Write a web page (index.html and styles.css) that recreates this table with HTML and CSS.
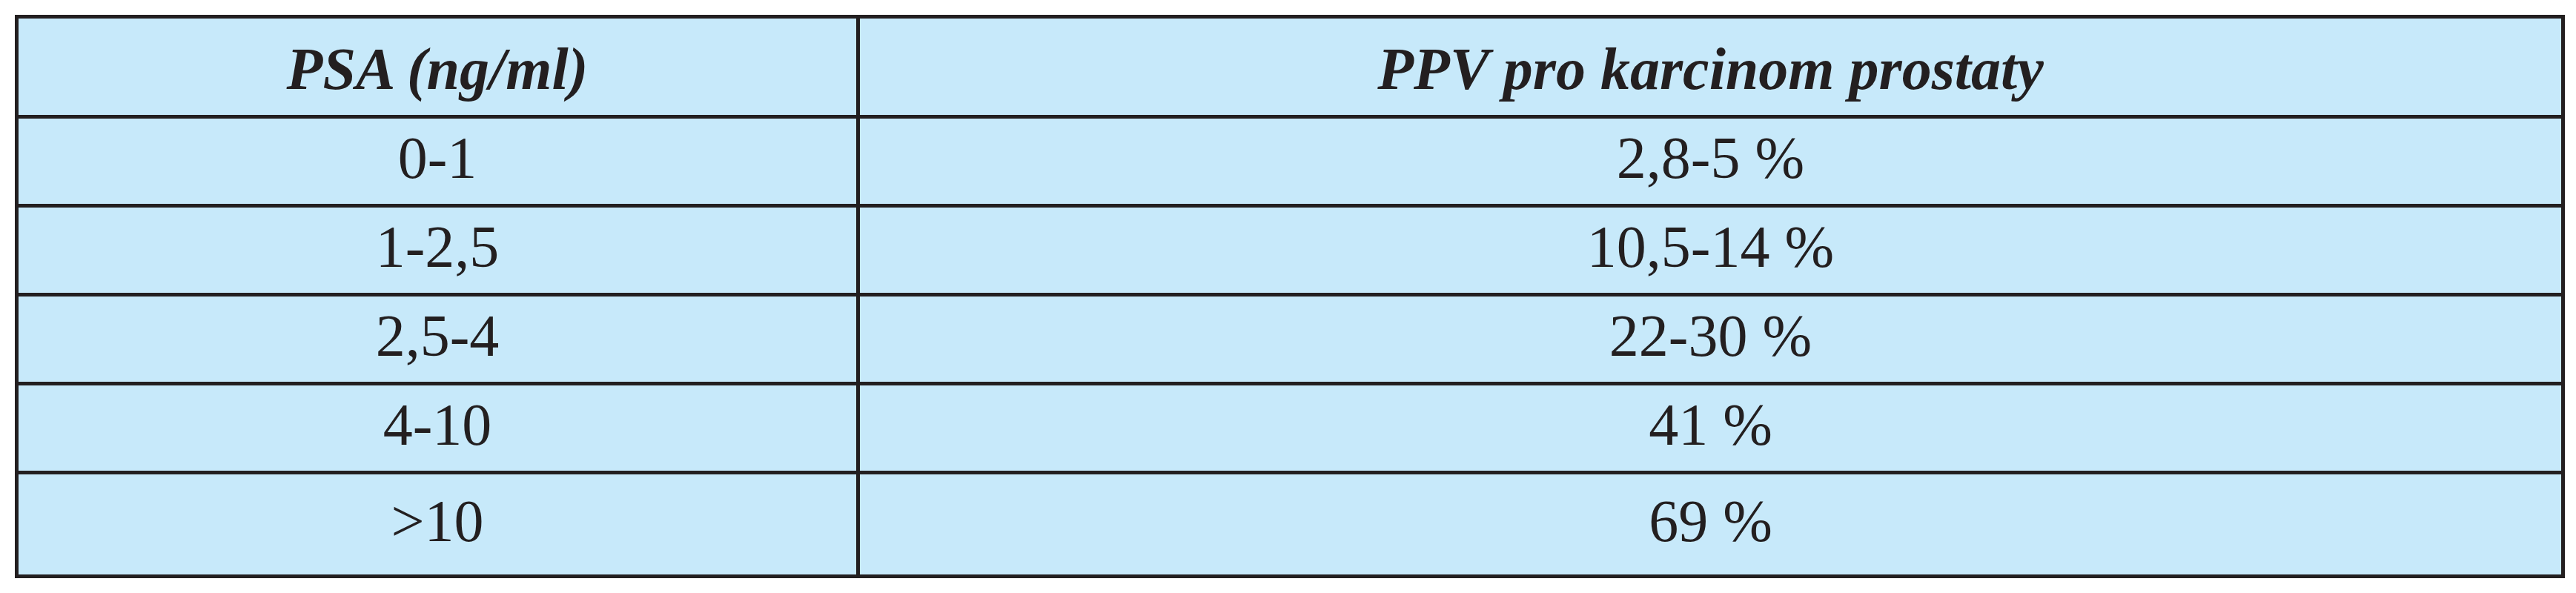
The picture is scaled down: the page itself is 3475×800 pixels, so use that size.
FILE: index.html
```html
<!DOCTYPE html>
<html lang="cs">
<head>
<meta charset="utf-8">
<title>PSA a PPV</title>
<link rel="stylesheet" href="styles.css">
</head>
<body>
<div class="wrap">
  <div class="psa-table">
    <div class="cell head">PSA (ng/ml)</div>
    <div class="cell head">PPV pro karcinom prostaty</div>
    <div class="cell">0-1</div>
    <div class="cell">2,8-5 %</div>
    <div class="cell">1-2,5</div>
    <div class="cell">10,5-14 %</div>
    <div class="cell">2,5-4</div>
    <div class="cell">22-30 %</div>
    <div class="cell">4-10</div>
    <div class="cell">41 %</div>
    <div class="cell">&gt;10</div>
    <div class="cell">69 %</div>
  </div>
</div>
</body>
</html>
```

FILE: styles.css
```css
html, body {
  margin: 0;
  padding: 0;
  background: #ffffff;
}

body {
  font-family: "Liberation Serif", "Times New Roman", serif;
  color: #231f20;
}

.wrap {
  padding: 20px 0 0 20px;
}

.psa-table {
  position: relative;
  display: grid;
  grid-template-columns: 1130px 2295px;
  grid-template-rows: 130px 115px 115px 115px 115px 135px;
  gap: 5px;
  padding: 5px;
  width: 3440px;
  box-sizing: border-box;
  background: #231f20;
}

.psa-table::after {
  content: "";
  position: absolute;
  left: 1135px;
  top: 100%;
  width: 5px;
  height: 5px;
  background: #231f20;
}

.cell {
  background: #c7e9fa;
  display: flex;
  align-items: center;
  justify-content: center;
  font-size: 80px;
  line-height: 1.1;
  padding-bottom: 10px;
  box-sizing: border-box;
  white-space: nowrap;
}

.cell.head {
  font-style: italic;
  font-weight: bold;
  padding-bottom: 0;
  padding-top: 6px;
}
```
